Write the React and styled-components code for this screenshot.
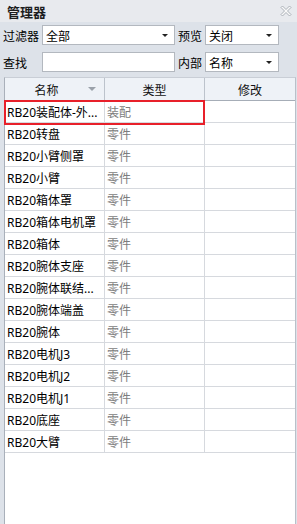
import React from "react";
import styled, { createGlobalStyle } from "styled-components";

const Global = createGlobalStyle`
  html, body { margin: 0; padding: 0; }
  body {
    font-family: "Noto Sans", "Noto Sans CJK SC", sans-serif;
    font-size: 12px;
    color: #000;
    background: #dde2e9;
  }
`;

const Panel = styled.div`
  width: 297px;
  height: 524px;
  display: flex;
  flex-direction: column;
  background: #dde2e9;
  box-sizing: border-box;
  overflow: hidden;
`;

const TitleBar = styled.div`
  height: 22px;
  flex: none;
  display: flex;
  align-items: center;
  justify-content: space-between;
  padding: 0 5px 0 7px;
  background: #e8eaee;
  font-family: "Noto Sans CJK SC", sans-serif;
  font-weight: 700;
  font-size: 13px;
  color: #1e1e1e;
`;

const CloseBtn = styled.svg`
  width: 12px;
  height: 12px;
  display: block;
`;

const Form = styled.div`
  display: grid;
  grid-template-columns: 39px 133px 30px 74px;
  grid-auto-rows: 20px;
  row-gap: 7px;
  padding-left: 3px;
  margin-top: 3px;
  flex: none;
`;

const Label = styled.div`
  display: flex;
  align-items: center;
  padding-left: ${(p) => (p.$inner ? "3px" : "0")};
  font-family: "Noto Sans CJK SC", sans-serif;
  font-size: 12px;
  white-space: nowrap;
`;

const Field = styled.div`
  box-sizing: border-box;
  height: 20px;
  background: #fff;
  border: 1px solid #b3b8bf;
  display: flex;
  align-items: center;
  justify-content: space-between;
  padding: 0 6px 0 3px;
  font-family: "Noto Sans CJK SC", sans-serif;
  font-size: 12px;
`;

const Caret = styled.span`
  width: 0;
  height: 0;
  border-left: 3px solid transparent;
  border-right: 3px solid transparent;
  border-top: 3px solid #222;
`;

const Table = styled.div`
  flex: 1;
  margin: 5px 1px 0 4px;
  background: #fff;
  border-left: 1px solid #a9b0ba;
  border-right: 1px solid #b9c0c9;
  border-top: 1px solid #c9ced6;
  display: flex;
  flex-direction: column;
`;

const HeaderRow = styled.div`
  display: grid;
  grid-template-columns: 100px 100px 1fr;
  height: 23px;
  box-sizing: border-box;
  background: #eef2f7;
  border-bottom: 1px solid #a6adb7;
`;

const HeadCell = styled.div`
  display: flex;
  align-items: center;
  border-right: ${(p) => (p.$last ? "none" : "1px solid #bcc3cc")};
  font-family: "Noto Sans CJK SC", sans-serif;
  font-size: 12px;
  color: #111;
`;

const HeadText = styled.span`
  flex: 1;
  text-align: center;
`;

const SortArrow = styled.span`
  width: 0;
  height: 0;
  margin-right: 8px;
  border-left: 4px solid transparent;
  border-right: 4px solid transparent;
  border-top: 4px solid #9aa1aa;
`;

const Body = styled.div`
  position: relative;
`;

const Row = styled.div`
  display: grid;
  grid-template-columns: 100px 100px 1fr;
  height: 22px;
  box-sizing: border-box;
  border-bottom: 1px solid #d6d9de;
`;

const Cell = styled.div`
  display: flex;
  align-items: center;
  padding-left: 2px;
  border-right: ${(p) => (p.$last ? "none" : "1px solid #d6d9de")};
  color: ${(p) => (p.$muted ? "#7d7d7d" : "#000")};
  white-space: nowrap;
  overflow: hidden;
  font-family: "Noto Sans", "Noto Sans CJK SC", sans-serif;
  font-size: 12px;
`;

const Highlight = styled.div`
  position: absolute;
  left: -1px;
  top: -1px;
  width: 201px;
  height: 25px;
  box-sizing: border-box;
  border: 2px solid #e8202a;
  pointer-events: none;
`;

const rows = [
  ["RB20装配体-外...", "装配"],
  ["RB20转盘", "零件"],
  ["RB20小臂侧罩", "零件"],
  ["RB20小臂", "零件"],
  ["RB20箱体罩", "零件"],
  ["RB20箱体电机罩", "零件"],
  ["RB20箱体", "零件"],
  ["RB20腕体支座", "零件"],
  ["RB20腕体联结...", "零件"],
  ["RB20腕体端盖", "零件"],
  ["RB20腕体", "零件"],
  ["RB20电机J3", "零件"],
  ["RB20电机J2", "零件"],
  ["RB20电机J1", "零件"],
  ["RB20底座", "零件"],
  ["RB20大臂", "零件"],
];

export default function App() {
  return (
    <>
      <Global />
      <Panel>
        <TitleBar>
          <span>管理器</span>
          <CloseBtn viewBox="0 0 12 12">
            <path
              d="M1 2.5 L2.5 1 L6 4.5 L9.5 1 L11 2.5 L7.5 6 L11 9.5 L9.5 11 L6 7.5 L2.5 11 L1 9.5 L4.5 6 Z"
              fill="#fafafa"
              stroke="#a3a8b0"
              strokeWidth="0.9"
              strokeLinejoin="miter"
            />
          </CloseBtn>
        </TitleBar>
        <Form>
          <Label>过滤器</Label>
          <Field>
            <span>全部</span>
            <Caret />
          </Field>
          <Label $inner>预览</Label>
          <Field>
            <span>关闭</span>
            <Caret />
          </Field>
          <Label>查找</Label>
          <Field />
          <Label $inner>内部</Label>
          <Field>
            <span>名称</span>
            <Caret />
          </Field>
        </Form>
        <Table>
          <HeaderRow>
            <HeadCell>
              <HeadText>名称</HeadText>
              <SortArrow />
            </HeadCell>
            <HeadCell>
              <HeadText>类型</HeadText>
            </HeadCell>
            <HeadCell $last>
              <HeadText>修改</HeadText>
            </HeadCell>
          </HeaderRow>
          <Body>
            {rows.map(([name, type]) => (
              <Row key={name}>
                <Cell>{name}</Cell>
                <Cell $muted>{type}</Cell>
                <Cell $last />
              </Row>
            ))}
            <Highlight />
          </Body>
        </Table>
      </Panel>
    </>
  );
}
